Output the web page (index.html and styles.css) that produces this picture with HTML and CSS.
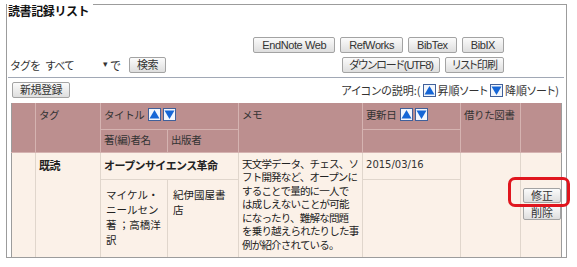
FILE: index.html
```html
<!DOCTYPE html>
<html lang="ja">
<head>
  <meta charset="UTF-8">
  <title>読書記録リスト</title>
  <link rel="stylesheet" href="styles.css">
</head>
<body>

<div class="panel">
  <h1 class="panel-title">読書記録リスト</h1>

  <div class="toolbar">
    <form class="search">
      <span class="label">タグを</span>
      <span class="select">すべて<span class="arrow">▾</span></span>
      <span class="label">で</span>
      <button type="button" class="btn">検索</button>
    </form>
    <div class="exports">
      <div class="export-row">
        <button class="btn btn-latin">EndNote Web</button>
        <button class="btn btn-latin">RefWorks</button>
        <button class="btn btn-latin">BibTex</button>
        <button class="btn btn-latin">BibIX</button>
      </div>
      <div class="export-row">
        <button class="btn btn-ja">ダウンロード(UTF8)</button>
        <button class="btn btn-ja">リスト印刷</button>
      </div>
    </div>
  </div>

  <hr class="divider">

  <div class="list-bar">
    <button class="btn">新規登録</button>
    <div class="legend">
      アイコンの説明:(
      <svg class="sort" width="13" height="13" viewBox="0 0 13 13"><rect x="0.5" y="0.5" width="12" height="12" fill="#f2f6fc" stroke="#40609a"/><polygon points="6.5,2 11.5,10.5 1.5,10.5" fill="#1566d6"/></svg>昇順ソート
      <svg class="sort" width="13" height="13" viewBox="0 0 13 13"><rect x="0.5" y="0.5" width="12" height="12" fill="#f2f6fc" stroke="#40609a"/><polygon points="1.5,2.5 11.5,2.5 6.5,11" fill="#1566d6"/></svg>降順ソート)
    </div>
  </div>

  <table class="records">
    <colgroup>
      <col style="width:24px">
      <col style="width:65px">
      <col style="width:67px">
      <col style="width:71px">
      <col style="width:124px">
      <col style="width:98px">
      <col style="width:60px">
      <col style="width:41px">
    </colgroup>
    <thead>
      <tr class="head-main">
        <th rowspan="2" class="edge-l"></th>
        <th rowspan="2">タグ</th>
        <th colspan="2">タイトル
          <svg class="sort" width="13" height="13" viewBox="0 0 13 13"><rect x="0.5" y="0.5" width="12" height="12" fill="#f2f6fc" stroke="#40609a"/><polygon points="6.5,2 11.5,10.5 1.5,10.5" fill="#1566d6"/></svg><svg class="sort" width="13" height="13" viewBox="0 0 13 13"><rect x="0.5" y="0.5" width="12" height="12" fill="#f2f6fc" stroke="#40609a"/><polygon points="1.5,2.5 11.5,2.5 6.5,11" fill="#1566d6"/></svg>
        </th>
        <th rowspan="2">メモ</th>
        <th>更新日
          <svg class="sort" width="13" height="13" viewBox="0 0 13 13"><rect x="0.5" y="0.5" width="12" height="12" fill="#f2f6fc" stroke="#40609a"/><polygon points="6.5,2 11.5,10.5 1.5,10.5" fill="#1566d6"/></svg><svg class="sort" width="13" height="13" viewBox="0 0 13 13"><rect x="0.5" y="0.5" width="12" height="12" fill="#f2f6fc" stroke="#40609a"/><polygon points="1.5,2.5 11.5,2.5 6.5,11" fill="#1566d6"/></svg>
        </th>
        <th rowspan="2">借りた図書</th>
        <th rowspan="2" class="edge-r"></th>
      </tr>
      <tr class="head-sub">
        <th>著(編)者名</th>
        <th>出版者</th>
        <th></th>
      </tr>
    </thead>
    <tbody>
      <tr class="row-main">
        <td rowspan="2" class="edge-l"></td>
        <td rowspan="2" class="tag">既読</td>
        <td colspan="2" class="book-title">オープンサイエンス革命</td>
        <td rowspan="2" class="memo">天文学データ、チェス、ソ<br>フト開発など、オープンに<br>することで量的に一人で<br>は成しえないことが可能<br>になったり、難解な問題<br>を乗り越えられたりした事<br>例が紹介されている。</td>
        <td class="date">2015/03/16</td>
        <td rowspan="2"></td>
        <td rowspan="2" class="actions edge-r">
          <button class="btn btn-small">修正</button>
          <button class="btn btn-small">削除</button>
        </td>
      </tr>
      <tr class="row-sub">
        <td class="author">マイケル・<br>ニールセン<br>著 ；高橋洋<br>訳</td>
        <td class="author">紀伊國屋書<br>店</td>
        <td></td>
      </tr>
    </tbody>
  </table>

  <div class="callout"></div>
</div>

</body>
</html>
```

FILE: styles.css
```css
body {
  margin: 0;
  font-family: "Noto Sans CJK JP", sans-serif;
  font-size: 11px;
  color: #222;
  background: #fff;
}

.panel {
  position: relative;
  margin: 4px 0 0 6px;
  width: 559px;
  border: 1px solid #9c9c9c;
}

.panel-title {
  width: fit-content;
  margin: -2px 0 0 0;
  padding: 0 4px 0 1px;
  background: #fff;
  font-size: 12px;
  font-weight: bold;
  line-height: 16px;
  letter-spacing: -0.4px;
  color: #111;
}

.toolbar {
  display: flex;
  justify-content: space-between;
  align-items: flex-end;
  margin-top: 18px;
  padding: 0 62px 0 3px;
}

.search {
  display: flex;
  align-items: center;
  gap: 3px;
  margin: 0;
}

.label {
  letter-spacing: -1px;
  color: #333;
}

.select {
  display: inline-flex;
  justify-content: space-between;
  width: 62px;
  padding-left: 2px;
  letter-spacing: -1px;
  color: #333;
}

.arrow {
  font-size: 9px;
  color: #333;
}

.search .btn {
  margin-left: 6px;
}

.exports {
  display: flex;
  flex-direction: column;
  align-items: flex-end;
  gap: 4px;
}

.export-row {
  display: flex;
  gap: 5px;
}

.btn {
  height: 16px;
  padding: 0 7px;
  border: 1px solid #a3a3a3;
  border-radius: 2px;
  background: linear-gradient(#fbfbfb, #dedede);
  font-family: "Liberation Sans", "Noto Sans CJK JP", sans-serif;
  font-size: 11px;
  font-feature-settings: "palt";
  line-height: 14px;
  color: #333;
  letter-spacing: -0.5px;
  cursor: pointer;
}

.btn-latin {
  padding: 0 8px;
  letter-spacing: -0.4px;
}

.btn-ja {
  padding: 0 6px;
  letter-spacing: -0.9px;
}

.divider {
  height: 0;
  margin: 4px 2px 0 1px;
  border: none;
  border-top: 1px solid #a1a8b5;
}

.list-bar {
  display: flex;
  justify-content: space-between;
  align-items: center;
  margin-top: 4px;
  padding: 0 7px 0 5px;
}

.legend {
  display: flex;
  align-items: center;
  font-feature-settings: "palt";
  color: #333;
  gap: 2px;
}

.sort {
  vertical-align: -2px;
}

.records {
  table-layout: fixed;
  width: 550px;
  margin: 5px 0 0 4px;
  border-collapse: collapse;
}

.records th,
.records td {
  padding: 4px 3px;
  vertical-align: top;
  text-align: left;
  line-height: 16px;
}

.records th {
  background: #bc8f8f;
  border: 1px solid #d5b3b1;
  border-top: none;
  font-size: 10.5px;
  font-weight: normal;
  color: #333;
  letter-spacing: -0.4px;
}

.records th .sort {
  margin-left: 2px;
}

.head-main {
  height: 26px;
}

.head-sub {
  height: 22px;
}

.head-sub th {
  padding-top: 2px;
}

.records td {
  background: #fbf1e8;
  border: 1px solid #e0d6cc;
}

.row-main {
  height: 27px;
}

.row-sub {
  height: 78px;
}

.records tbody tr:last-child td,
.records td[rowspan] {
  border-bottom: none;
}

.records .edge-l {
  border-left: 1px solid #9c9c9c;
}

.records .edge-r {
  border-right: 1px solid #9c9c9c;
}

.tag,
.book-title {
  padding-top: 5px;
  font-weight: bold;
  letter-spacing: -0.6px;
}

.book-title {
  padding-left: 5px;
}

.memo {
  padding: 3px 4px;
  font-size: 10.5px;
  line-height: 13.5px !important;
  letter-spacing: -0.8px;
  white-space: nowrap;
}

.date {
  padding-left: 4px;
  font-family: "DejaVu Sans", sans-serif;
  font-size: 10px;
  color: #333;
}

.author {
  padding: 7px 5px 0 5px !important;
  font-size: 10.5px;
  line-height: 15px !important;
  white-space: nowrap;
}

.actions {
  vertical-align: middle !important;
  padding: 0 1px 0 1px !important;
}

.btn-small {
  display: block;
  width: 38px;
  height: 15px;
  margin: 0 0 2px 1px;
  padding: 0;
  font-family: "Noto Sans CJK JP", sans-serif;
  letter-spacing: 0;
  line-height: 13px;
}

.callout {
  position: absolute;
  left: 501px;
  top: 172px;
  width: 62px;
  height: 30px;
  box-sizing: border-box;
  border: 3px solid #e0161e;
  border-radius: 7px;
}
```
